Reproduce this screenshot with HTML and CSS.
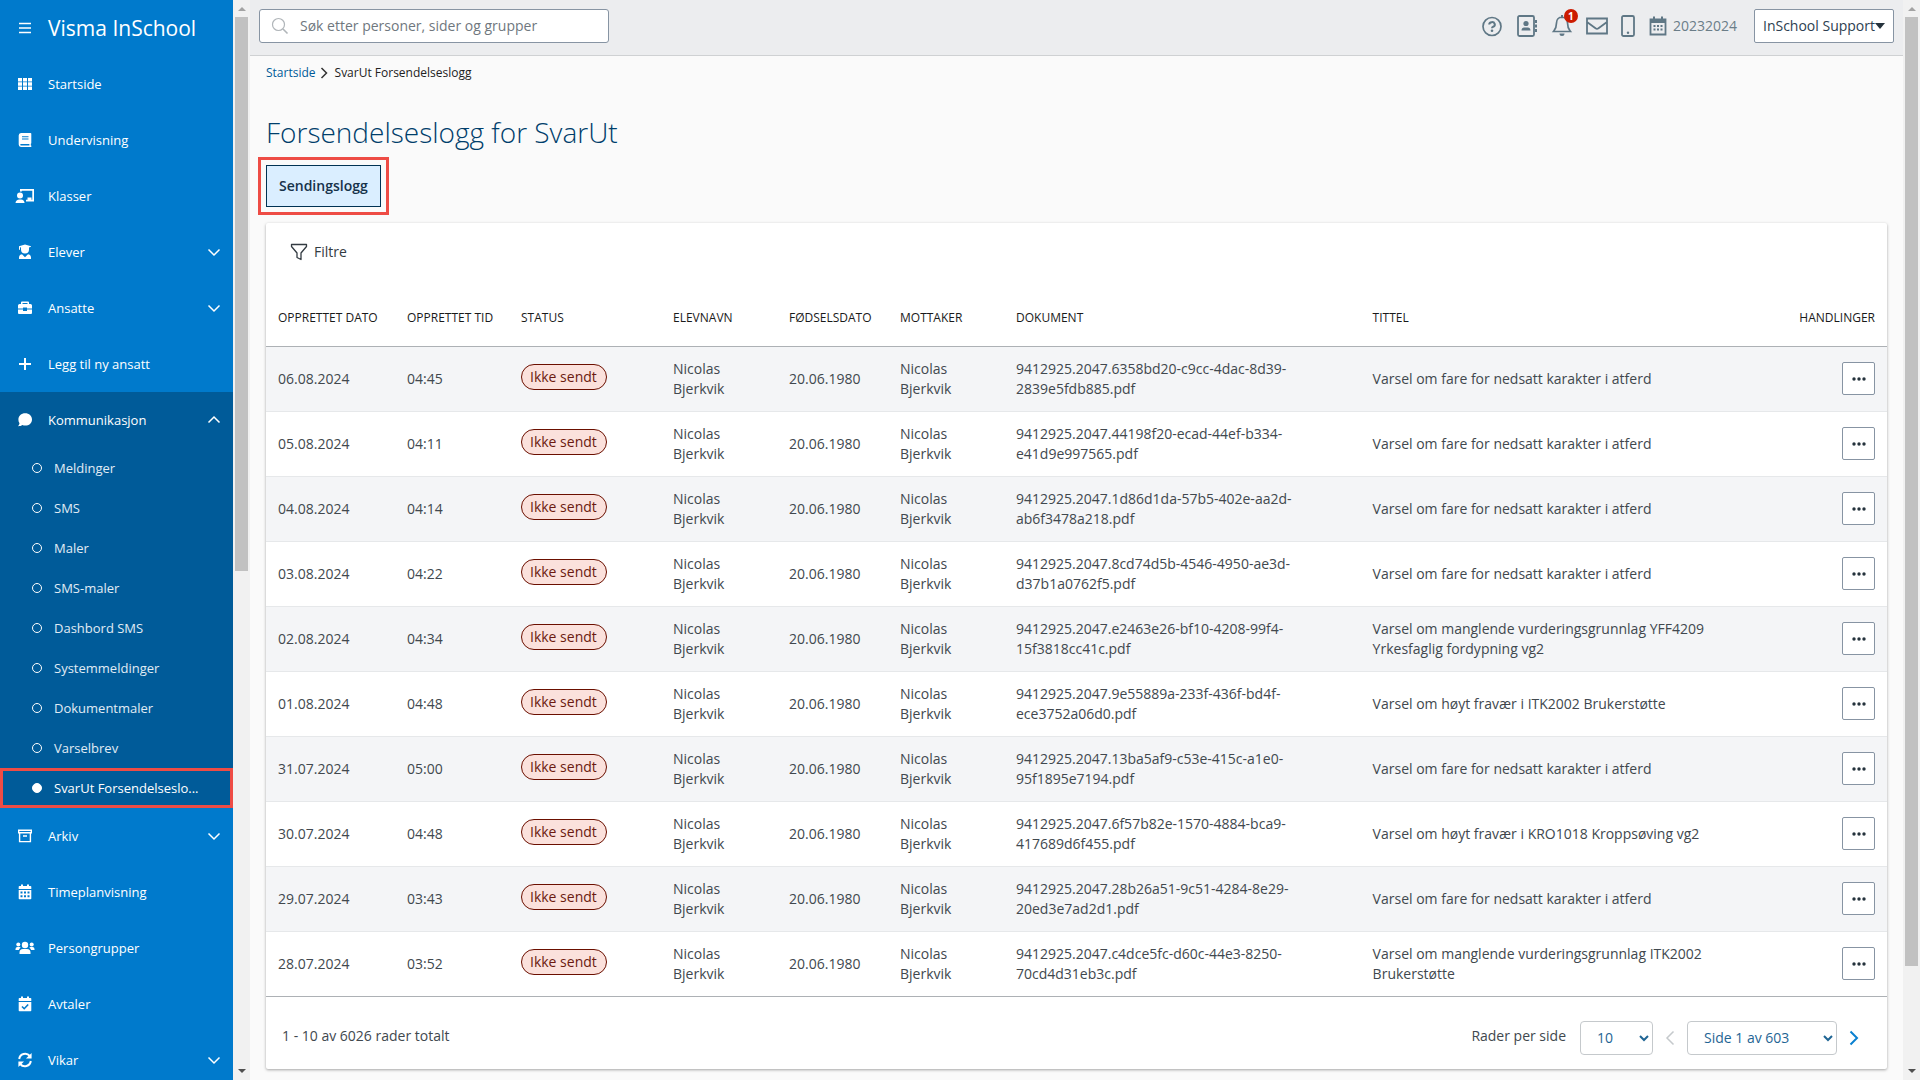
FILE: index.html
```html
<!DOCTYPE html>
<html lang="nb">
<head>
    <meta charset="UTF-8">
    <meta name="viewport" content="width=device-width, initial-scale=1.0">
    <title>SvarUt Forsendelseslogg</title>
    <link rel="stylesheet" href="styles.css">
</head>
<body>
    <aside class="sidebar">
        <div class="brand">
            <button class="menu-btn" type="button" aria-label="Meny">
                <svg class="icon" viewBox="0 0 16 16"><path d="M2 3.5h12M2 8h12M2 12.5h12" fill="none" stroke="#fff" stroke-width="1.6"/></svg>
            </button>
            <span>Visma InSchool</span>
        </div>
        <nav>
            <a class="nav-item" href="#">
                <svg class="icon" viewBox="0 0 16 16"><path d="M1 2h4v3.400H1zM6 2h4v3.400H6zM11 2h4v3.400h-4zM1 6.300h4v3.400H1zM6 6.300h4v3.400H6zM11 6.300h4v3.400h-4zM1 10.600h4V14H1zM6 10.600h4V14H6zM11 10.600h4V14h-4z"/></svg>
                Startside
            </a>
            <a class="nav-item" href="#">
                <svg class="icon" viewBox="0 0 16 16"><path fill-rule="evenodd" d="M4 1h9.500a.8.8 0 0 1 .8.800V11a.8.8 0 0 1-.5.800v1.800h.5V15H4a2.500 2.500 0 0 1-2.300-2.500V3.500A2.500 2.500 0 0 1 4 1zM5 4.200v1h6.500v-1zM5 6.400v1h6.500v-1zM4 12a.8.8 0 0 0 0 1.600h8.400V12z"/></svg>
                Undervisning
            </a>
            <a class="nav-item" href="#">
                <svg class="icon icon-wide" viewBox="0 0 20 16"><circle cx="5" cy="7.500" r="3"/><path d="M0.500 15a4 4 0 0 1 4-3.600h1.500a4 4 0 0 1 3.600 3.600zM5 1h14v12.500h-8v-1.800h1.500V9.500h4v2.200h.8V2.800H6.800v.8H5z"/></svg>
                Klasser
            </a>
            <a class="nav-item" href="#">
                <svg class="icon" viewBox="0 0 16 16"><path d="M8 .5l6 1.700v.6L12 3.500V5.500a4 4 0 0 1-8 0V3.500L3 3.200v2.500H2V2.200zM5 10.200l3 3 3-3a3.500 3.500 0 0 1 3 3.300V15H2v-1.500a3.500 3.500 0 0 1 3-3.300z"/></svg>
                Elever
                <svg class="chevron" viewBox="0 0 14 14"><path d="M1.500 4.500L7 10l5.500-5.500"/></svg>
            </a>
            <a class="nav-item" href="#">
                <svg class="icon" viewBox="0 0 16 16"><path fill-rule="evenodd" d="M5 1.500h6a1 1 0 0 1 1 1V4h1.500A1.500 1.500 0 0 1 15 5.500v3h-5v-1H6v1H1v-3A1.500 1.500 0 0 1 2.500 4H4V2.500a1 1 0 0 1 1-1zM5.500 3v1h5V3zM1 9.500h5v1.500h4V9.500h5V13a1 1 0 0 1-1 1H2a1 1 0 0 1-1-1z"/></svg>
                Ansatte
                <svg class="chevron" viewBox="0 0 14 14"><path d="M1.500 4.500L7 10l5.500-5.500"/></svg>
            </a>
            <a class="nav-item" href="#">
                <svg class="icon" viewBox="0 0 16 16"><path d="M7 2h2v5h5v2H9v5H7V9H2V7h5z"/></svg>
                Legg til ny ansatt
            </a>
            <div class="nav-group">
                <a class="nav-item" href="#">
                    <svg class="icon" viewBox="0 0 16 16"><path d="M8.200 1.200c3.900 0 6.800 2.700 6.800 6.200s-2.900 6.200-6.800 6.200c-1 0-2-.2-2.800-.6-1 .8-2.500 1.200-4.400 1.200 .9-.9 1.400-1.900 1.500-3A6 6 0 0 1 1.400 7.400c0-3.500 2.900-6.200 6.800-6.200z"/></svg>
                    Kommunikasjon
                    <svg class="chevron" viewBox="0 0 14 14"><path d="M1.500 9.500L7 4l5.500 5.500"/></svg>
                </a>
                <ul class="submenu">
                    <li><a href="#">Meldinger</a></li>
                    <li><a href="#">SMS</a></li>
                    <li><a href="#">Maler</a></li>
                    <li><a href="#">SMS-maler</a></li>
                    <li><a href="#">Dashbord SMS</a></li>
                    <li><a href="#">Systemmeldinger</a></li>
                    <li><a href="#">Dokumentmaler</a></li>
                    <li><a href="#">Varselbrev</a></li>
                    <li class="active"><a href="#">SvarUt Forsendelseslo...</a></li>
                </ul>
            </div>
            <a class="nav-item" href="#">
                <svg class="icon" viewBox="0 0 16 16"><path d="M1.700 2.200h12.600v2.600H1.700zM2.600 5v8.600h10.800V5M6 8h4" fill="none" stroke="#fff" stroke-width="1.400"/></svg>
                Arkiv
                <svg class="chevron" viewBox="0 0 14 14"><path d="M1.500 4.500L7 10l5.500-5.500"/></svg>
            </a>
            <a class="nav-item" href="#">
                <svg class="icon" viewBox="0 0 16 16"><path fill-rule="evenodd" d="M4 .5h2V2h4V.5h2V2h1.500a.8.8 0 0 1 .8.800V5H1.700V2.800a.8.8 0 0 1 .8-.8H4zM1.700 6h12.600v8.500a.8.8 0 0 1-.8.800h-11a.8.8 0 0 1-.8-.8zM3.500 7.500v2h2v-2zM7 7.500v2h2v-2zM10.500 7.500v2h2v-2zM3.500 11.200v2h2v-2zM7 11.200v2h2v-2zM10.500 11.200v2h2v-2z"/></svg>
                Timeplanvisning
            </a>
            <a class="nav-item" href="#">
                <svg class="icon icon-wide" viewBox="0 0 20 16"><circle cx="10" cy="5" r="3.200"/><circle cx="3.300" cy="4.500" r="2"/><circle cx="16.700" cy="4.500" r="2"/><path d="M4.500 14v-1.500a3.500 3.500 0 0 1 3.500-3.500h4a3.500 3.500 0 0 1 3.500 3.500V14zM.5 10V9a2 2 0 0 1 2-2h2a2 2 0 0 1 1.200.4A5 5 0 0 0 3.800 10zM19.500 10V9a2 2 0 0 0-2-2h-2a2 2 0 0 0-1.200.4A5 5 0 0 1 16.200 10z"/></svg>
                Persongrupper
            </a>
            <a class="nav-item" href="#">
                <svg class="icon" viewBox="0 0 16 16"><path d="M4 .5h2V2h4V.5h2V2h1.500a.8.8 0 0 1 .8.800V5H1.700V2.800a.8.8 0 0 1 .8-.8H4zM1.700 6h12.600v8.500a.8.8 0 0 1-.8.800h-11a.8.8 0 0 1-.8-.8z"/><path d="M5 10.500l2.200 2.200L11.200 8.500" fill="none" stroke="#007acc" stroke-width="1.600"/></svg>
                Avtaler
            </a>
            <a class="nav-item" href="#">
                <svg class="icon" viewBox="0 0 16 16"><path d="M2.200 7a6 6 0 0 1 10.600-3M13.800 9a6 6 0 0 1-10.600 3" fill="none" stroke="#fff" stroke-width="2"/><path d="M14.600 1v5.500H9zM1.400 15V9.500H7z"/></svg>
                Vikar
                <svg class="chevron" viewBox="0 0 14 14"><path d="M1.500 4.500L7 10l5.500-5.500"/></svg>
            </a>
        </nav>
    </aside>

    <div class="scrollbar">
        <span class="arrow-up"></span>
        <span class="thumb thumb-short"></span>
        <span class="arrow-down"></span>
    </div>

    <div class="page">
        <header class="topbar">
            <label class="search">
                <svg viewBox="0 0 18 18" width="18" height="18"><circle cx="7.500" cy="7.500" r="6" fill="none" stroke="#b0b5b9" stroke-width="1.200"/><path d="M12 12l4.500 4.500" stroke="#b0b5b9" stroke-width="1.600"/></svg>
                <input type="text" placeholder="Søk etter personer, sider og grupper" aria-label="Søk">
            </label>
            <div class="tools">
                <button type="button" aria-label="Hjelp">
                    <svg viewBox="0 0 22 22" width="22" height="22"><circle cx="11" cy="11.500" r="9" fill="none" stroke="#5f7785" stroke-width="1.700"/><path d="M8.200 9.500a2.800 2.400 0 1 1 4 2.200c-.9.4-1.200.8-1.200 1.600" fill="none" stroke="#5f7785" stroke-width="2"/><circle cx="11" cy="15.800" r="1.300" fill="#5f7785"/></svg>
                </button>
                <button type="button" aria-label="Kontakter">
                    <svg viewBox="0 0 22 22" width="22" height="22"><rect x="2" y="1" width="16" height="20" rx="1.500" fill="none" stroke="#5f7785" stroke-width="1.800"/><path d="M19 5h2v3h-2zM19 9.500h2v3h-2zM19 14h2v3h-2zM5.500 15.500c0-2 1.200-3 2.500-3h4c1.300 0 2.500 1 2.500 3z" fill="#5f7785"/><circle cx="10" cy="8.500" r="2.600" fill="#5f7785"/></svg>
                </button>
                <button class="bell" type="button" aria-label="Varsler">
                    <svg viewBox="0 0 22 22" width="22" height="22"><path d="M11 2.200c-3.300 0-5.500 2.500-5.500 5.800 0 5-1.500 6.500-3 8.500h17c-1.500-2-3-3.500-3-8.500 0-3.300-2.200-5.800-5.500-5.800z" fill="none" stroke="#5f7785" stroke-width="1.700"/><path d="M8.500 18.500h5a2.500 2.500 0 0 1-5 0zM10 0h2v2h-2z" fill="#5f7785"/></svg>
                    <span class="count">1</span>
                </button>
                <button type="button" aria-label="Meldinger">
                    <svg viewBox="0 0 22 22" width="22" height="22"><path d="M1 3.500h20v15H1zM1 7l8.500 6.300q1.500 1 3 0L21 7" fill="none" stroke="#5f7785" stroke-width="1.800"/></svg>
                </button>
                <button type="button" aria-label="Mobil">
                    <svg viewBox="0 0 14 22" width="14" height="22"><rect x="1" y="1" width="12" height="20" rx="1.500" fill="none" stroke="#5f7785" stroke-width="1.800"/><circle cx="7" cy="17.800" r="1.200" fill="#5f7785"/></svg>
                </button>
                <button class="year" type="button">
                    <svg viewBox="0 0 18 20" width="18" height="20"><path d="M1.500 3.500h15v15h-15z" fill="none" stroke="#5f7785" stroke-width="1.800"/><path d="M4 .5h2v3H4zM12 .5h2v3h-2zM1 3h16v4H1zM4.500 9h2v2h-2zM8 9h2v2H8zM11.500 9h2v2h-2zM4.500 12.500h2v2h-2zM8 12.500h2v2H8zM11.500 12.500h2v2h-2z" fill="#5f7785"/></svg>
                    20232024
                </button>
                <button class="user" type="button">InSchool Support<span class="caret"></span></button>
            </div>
        </header>

        <main>
            <nav class="breadcrumb">
                <a href="#">Startside</a>
                <svg viewBox="0 0 8 12" width="8" height="12"><path d="M1.500 1L6.500 6l-5 5" fill="none" stroke="#333" stroke-width="1.500"/></svg>
                <span>SvarUt Forsendelseslogg</span>
            </nav>
            <h1>Forsendelseslogg for SvarUt</h1>
            <button class="tab" type="button">Sendingslogg</button>

            <section class="card">
                <button class="filter" type="button">
                    <svg viewBox="0 0 18 18" width="18" height="18"><path d="M1.500 1.500h15v2L11 10v6.500l-4-2V10L1.500 3.500z" fill="none" stroke="#333b42" stroke-width="1.300" stroke-linejoin="round"/></svg>
                    Filtre
                </button>
                <table>
                    <colgroup>
                        <col class="col-date">
                        <col class="col-time">
                        <col class="col-status">
                        <col class="col-name">
                        <col class="col-birth">
                        <col class="col-name">
                        <col class="col-document">
                        <col>
                        <col class="col-actions">
                    </colgroup>
                    <thead>
                        <tr>
                            <th>OPPRETTET DATO</th>
                            <th>OPPRETTET TID</th>
                            <th>STATUS</th>
                            <th>ELEVNAVN</th>
                            <th>FØDSELSDATO</th>
                            <th>MOTTAKER</th>
                            <th>DOKUMENT</th>
                            <th>TITTEL</th>
                            <th class="actions">HANDLINGER</th>
                        </tr>
                    </thead>
                    <tbody id="rows"></tbody>
                </table>
                <footer class="pager">
                    <span class="total">1 - 10 av 6026 rader totalt</span>
                    <label for="perPage">Rader per side</label>
                    <select id="perPage" class="per-page"><option>10</option></select>
                    <button type="button" aria-label="Forrige side" disabled>
                        <svg viewBox="0 0 10 16" width="10" height="16"><path d="M8.500 1.500L2 8l6.500 6.500" fill="none" stroke="#c5c9cc" stroke-width="1.500"/></svg>
                    </button>
                    <select class="page-select" aria-label="Side"><option>Side 1 av 603</option></select>
                    <button type="button" aria-label="Neste side">
                        <svg viewBox="0 0 10 16" width="10" height="16"><path d="M1.500 1.500L8 8l-6.500 6.500" fill="none" stroke="#0a80d0" stroke-width="2"/></svg>
                    </button>
                </footer>
            </section>
        </main>
    </div>

    <div class="scrollbar">
        <span class="arrow-up"></span>
        <span class="thumb thumb-long"></span>
        <span class="arrow-down"></span>
    </div>

    <script src="script.js"></script>
</body>
</html>
```

FILE: styles.css
```css
*, *::before {
    box-sizing: border-box;
}
body {
    display: flex;
    height: 100vh;
    margin: 0;
    overflow: hidden;
    font-family: "Open Sans", "Noto Sans", sans-serif;
    font-size: 14px;
    line-height: 20px;
    color: #41484e;
    background-color: #fafafa;
}
button, input, select {
    font: inherit;
    color: inherit;
}
button {
    padding: 0;
    border: 0;
    background: none;
    cursor: pointer;
}
svg {
    display: block;
    flex-shrink: 0;
}

/* Sidebar */
.sidebar {
    flex: 0 0 233px;
    overflow: hidden;
    background-color: #007acc;
    color: #fff;
}
.brand, .nav-item {
    display: flex;
    align-items: center;
    gap: 15px;
    height: 56px;
    padding: 0 12px 0 17px;
}
.brand {
    font-size: 21px;
    font-weight: 500;
}
.nav-item {
    font-size: 13px;
    font-weight: 500;
    color: #fff;
    text-decoration: none;
}
.icon {
    width: 16px;
    height: 16px;
    fill: #fff;
}
.icon-wide {
    width: 20px;
    margin: 0 -2px;
}
.chevron {
    width: 14px;
    height: 14px;
    margin-left: auto;
    fill: none;
    stroke: #fff;
    stroke-width: 1.5;
}
.nav-group {
    background-color: #005b99;
}
.submenu {
    margin: 0;
    padding: 0;
    list-style: none;
}
.submenu a {
    display: flex;
    align-items: center;
    gap: 12px;
    height: 40px;
    padding-left: 32px;
    font-size: 13px;
    font-weight: 500;
    color: #e0ecf5;
    text-decoration: none;
}
.submenu a::before {
    content: "";
    width: 10px;
    height: 10px;
    border: 1px solid #fff;
    border-radius: 50%;
}
.submenu .active {
    outline: 3px solid #ee4c45;
    outline-offset: -3px;
}
.submenu .active a {
    color: #fff;
}
.submenu .active a::before {
    background-color: #fff;
}

/* Scrollbars */
.scrollbar {
    display: flex;
    flex: 0 0 17px;
    flex-direction: column;
    align-items: center;
    padding: 7px 0;
    background-color: #f1f1f1;
}
.arrow-up, .arrow-down {
    border: 4px solid transparent;
}
.arrow-up {
    border-top-width: 0;
    border-bottom-color: #a3a3a3;
}
.arrow-down {
    margin-top: auto;
    border-bottom-width: 0;
    border-top-color: #505050;
}
.thumb {
    width: 13px;
    margin-top: 6px;
    background-color: #c1c1c1;
}
.thumb-short {
    height: 52%;
}
.thumb-long {
    height: 89%;
}

/* Top bar */
.page {
    flex: 1;
    min-width: 0;
}
.topbar {
    display: flex;
    align-items: center;
    justify-content: space-between;
    height: 56px;
    padding: 0 9px 3px;
    border-bottom: 1px solid #cfd1d3;
    background-color: #ecedef;
}
.search {
    display: flex;
    align-items: center;
    gap: 11px;
    width: 350px;
    height: 34px;
    padding-left: 11px;
    border: 1px solid #8794a3;
    border-radius: 3px;
    background-color: #fff;
}
.search input {
    flex: 1;
    padding: 0;
    border: 0;
    outline: 0;
    background: none;
}
.search input::placeholder {
    color: #6f777e;
}
.tools {
    display: flex;
    align-items: center;
    gap: 13px;
}
.bell {
    position: relative;
}
.count {
    position: absolute;
    top: -6px;
    right: -5px;
    width: 14px;
    height: 14px;
    border-radius: 50%;
    background-color: #cc1b00;
    color: #fff;
    font-size: 10px;
    font-weight: 700;
    line-height: 14px;
}
.year {
    display: flex;
    align-items: center;
    gap: 6px;
    margin-left: 1px;
    color: #6b7d88;
}
.user {
    display: flex;
    align-items: center;
    height: 34px;
    margin-left: 4px;
    padding: 0 8px;
    border: 1px solid #8794a3;
    border-radius: 2px;
    background-color: #fff;
    color: #2c3e50;
    font-weight: 500;
}
.caret {
    border: 5px solid transparent;
    border-top: 6px solid #25323c;
    border-bottom: 0;
}

/* Content */
main {
    padding: 7px 16px 0;
}
.breadcrumb {
    display: flex;
    align-items: center;
    gap: 4px;
    font-size: 12px;
    font-weight: 500;
}
.breadcrumb a {
    color: #005b99;
    text-decoration: none;
}
.breadcrumb span {
    margin-left: 3px;
    color: #222;
}
h1 {
    margin: 29px 0 13px;
    font-size: 28px;
    font-weight: 300;
    line-height: 40px;
    color: #003e6b;
}
.tab {
    display: block;
    height: 42px;
    padding: 0 12px;
    border: 1px solid #003253;
    background-color: #daeeff;
    color: #16324a;
    font-weight: 600;
    outline: 3px solid #ee4c45;
    outline-offset: 5px;
}
.card {
    margin-top: 16px;
    border-radius: 2px;
    background-color: #fff;
    box-shadow: 0 1px 3px rgba(0, 0, 0, 0.35);
}
.filter {
    display: flex;
    align-items: center;
    gap: 6px;
    height: 58px;
    padding-left: 24px;
    color: #333b42;
}
table {
    width: 100%;
    table-layout: fixed;
    border-collapse: collapse;
}
th, td {
    padding: 0 12px;
    text-align: left;
}
th {
    height: 65px;
    padding-top: 10px;
    border-bottom: 1px solid #adb1b5;
    font-size: 12px;
    font-weight: 500;
    color: #1a1a1a;
    white-space: nowrap;
}
td {
    height: 65px;
    border-bottom: 1px solid #e6e8ea;
}
tbody tr:nth-child(odd) {
    background-color: #f4f5f7;
}
tbody tr:last-child td {
    border-bottom-color: #adb1b5;
}
.col-date {
    width: 129px;
}
.col-time {
    width: 114px;
}
.col-status {
    width: 152px;
}
.col-name {
    width: 116px;
}
.col-birth {
    width: 111px;
}
.col-document {
    width: 22%;
}
.col-actions {
    width: 103px;
}
.actions {
    text-align: right;
}
.status {
    padding-bottom: 4px;
}
.badge {
    display: inline-block;
    height: 26px;
    padding: 0 9px 0 8px;
    border: 1px solid #6b0f00;
    border-radius: 13px;
    background-color: #fbe1dc;
    color: #6b1a10;
    line-height: 24px;
}
.more {
    display: inline-flex;
    align-items: center;
    justify-content: center;
    width: 33px;
    height: 33px;
    border: 1px solid #8794a3;
    border-radius: 2px;
    background-color: #fff;
    vertical-align: middle;
}
.pager {
    display: flex;
    align-items: center;
    height: 72px;
    padding: 10px 28px 0 16px;
}
.total, .pager label {
    padding-bottom: 4px;
}
.total {
    margin-right: auto;
}
.pager select {
    height: 34px;
    border: 1px solid #c5c9cc;
    border-radius: 4px;
    background-color: #fff;
    color: #1f6594;
}
.per-page {
    width: 73px;
    margin: 0 12px 0 14px;
    padding-left: 12px;
}
.page-select {
    width: 150px;
    margin: 0 12px;
    padding-left: 12px;
}
```

FILE: script.js
```js
const fare = 'Varsel om fare for nedsatt karakter i atferd';
const rows = [
    ['06.08.2024', '04:45', '9412925.2047.6358bd20-c9cc-4dac-8d39-2839e5fdb885.pdf', fare],
    ['05.08.2024', '04:11', '9412925.2047.44198f20-ecad-44ef-b334-e41d9e997565.pdf', fare],
    ['04.08.2024', '04:14', '9412925.2047.1d86d1da-57b5-402e-aa2d-ab6f3478a218.pdf', fare],
    ['03.08.2024', '04:22', '9412925.2047.8cd74d5b-4546-4950-ae3d-d37b1a0762f5.pdf', fare],
    ['02.08.2024', '04:34', '9412925.2047.e2463e26-bf10-4208-99f4-15f3818cc41c.pdf', 'Varsel om manglende vurderingsgrunnlag YFF4209 Yrkesfaglig fordypning vg2'],
    ['01.08.2024', '04:48', '9412925.2047.9e55889a-233f-436f-bd4f-ece3752a06d0.pdf', 'Varsel om høyt fravær i ITK2002 Brukerstøtte'],
    ['31.07.2024', '05:00', '9412925.2047.13ba5af9-c53e-415c-a1e0-95f1895e7194.pdf', fare],
    ['30.07.2024', '04:48', '9412925.2047.6f57b82e-1570-4884-bca9-417689d6f455.pdf', 'Varsel om høyt fravær i KRO1018 Kroppsøving vg2'],
    ['29.07.2024', '03:43', '9412925.2047.28b26a51-9c51-4284-8e29-20ed3e7ad2d1.pdf', fare],
    ['28.07.2024', '03:52', '9412925.2047.c4dce5fc-d60c-44e3-8250-70cd4d31eb3c.pdf', 'Varsel om manglende vurderingsgrunnlag ITK2002 Brukerstøtte']
];

document.getElementById('rows').innerHTML = rows.map(([date, time, file, title]) => `
    <tr>
        <td>${date}</td>
        <td>${time}</td>
        <td class="status"><span class="badge">Ikke sendt</span></td>
        <td>Nicolas<br>Bjerkvik</td>
        <td>20.06.1980</td>
        <td>Nicolas<br>Bjerkvik</td>
        <td>${file}</td>
        <td>${title}</td>
        <td class="actions">
            <button class="more" type="button" aria-label="Handlinger">
                <svg viewBox="0 0 16 4" width="16" height="4"><circle cx="3" cy="2" r="1.700" fill="#25323c"/><circle cx="8" cy="2" r="1.700" fill="#25323c"/><circle cx="13" cy="2" r="1.700" fill="#25323c"/></svg>
            </button>
        </td>
    </tr>`).join('');
```
